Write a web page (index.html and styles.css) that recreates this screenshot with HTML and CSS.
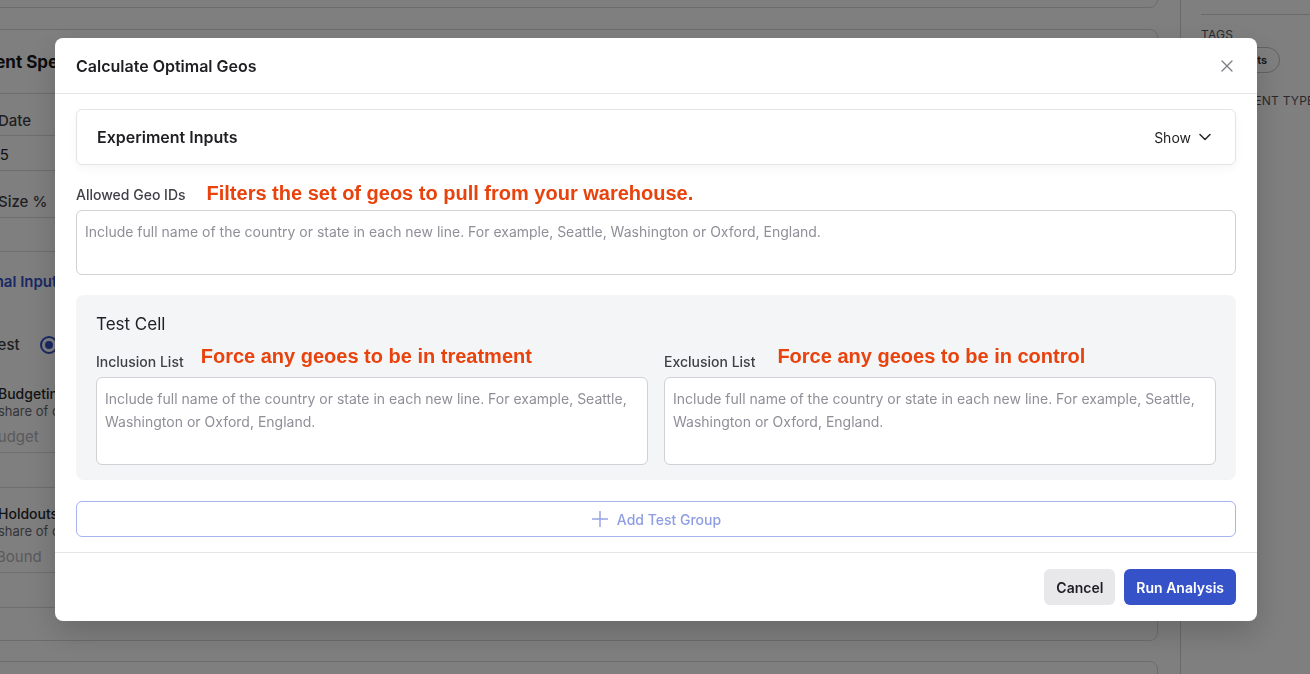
FILE: index.html
```html
<!DOCTYPE html>
<html lang="en">
<head>
<meta charset="utf-8">
<title>Calculate Optimal Geos</title>
<link rel="stylesheet" href="styles.css">
</head>
<body>
<div class="page">
  <main class="main">
    <section class="card card-prev"></section>
    <section class="card card-spec">
      <header class="spec-head"><h2 class="spec-title">Experiment Specs</h2></header>
      <div class="row row-1"><span class="bg-label">Date</span></div>
      <div class="row row-2"><span class="bg-value">2025</span></div>
      <div class="row row-3"><span class="bg-label bg-size">Size %</span></div>
      <div class="row row-4"></div>
      <div class="row row-5">
        <a class="bg-link">Additional Inputs</a>
        <div class="bg-radio-row"><span class="bg-label bg-test">Test</span><span class="radio"><span class="radio-dot"></span></span></div>
        <div class="bg-strong">Budgeting</div>
        <div class="bg-desc">share of control budget</div>
        <div class="bg-ph bg-ph-budget">Budget</div>
      </div>
      <div class="row row-6"></div>
      <div class="row row-7">
        <div class="bg-strong">Holdouts</div>
        <div class="bg-desc">share of control geos</div>
        <div class="bg-ph bg-ph-bound">Bound</div>
      </div>
      <div class="row row-8"></div>
    </section>
    <section class="card card-next"></section>
  </main>
  <aside class="side">
    <div class="side-block"></div>
    <div class="side-label side-label-tags">Tags</div>
    <span class="chip">Geo Tests</span>
    <div class="side-label side-label-type">Experiment Type</div>
  </aside>
</div>

<div class="overlay"></div>

<div class="modal" role="dialog" aria-label="Calculate Optimal Geos">
  <div class="modal-head">
    <h1 class="modal-title">Calculate Optimal Geos</h1>
    <button class="close-btn" aria-label="Close">
      <svg width="12" height="12" viewBox="0 0 12 12"><path d="M1 1L11 11M11 1L1 11" stroke="#7c7c82" stroke-width="1.3" stroke-linecap="round"/></svg>
    </button>
  </div>
  <div class="modal-body">
    <div class="collapse">
      <span class="collapse-title">Experiment Inputs</span>
      <button class="show-btn">Show
        <svg width="12" height="8" viewBox="0 0 12 8"><path d="M1 1.5L6 6.5L11 1.5" fill="none" stroke="#27272a" stroke-width="1.5" stroke-linecap="round" stroke-linejoin="round"/></svg>
      </button>
    </div>

    <div class="label-row label-row-geo">
      <label class="field-label" for="geo-ids">Allowed Geo IDs</label>
      <span class="note note-geo">Filters the set of geos to pull from your warehouse.</span>
    </div>
    <textarea id="geo-ids" class="input input-geo" placeholder="Include full name of the country or state in each new line. For example, Seattle, Washington or Oxford, England."></textarea>

    <div class="test-cell">
      <div class="test-title">Test Cell</div>
      <div class="cell-grid">
        <div class="cell-col">
          <div class="label-row">
            <label class="field-label" for="inc">Inclusion List</label>
            <span class="note note-cell note-inc">Force any geoes to be in treatment</span>
          </div>
          <textarea id="inc" class="input input-cell" placeholder="Include full name of the country or state in each new line. For example, Seattle, Washington or Oxford, England."></textarea>
        </div>
        <div class="cell-col">
          <div class="label-row">
            <label class="field-label" for="exc">Exclusion List</label>
            <span class="note note-cell note-exc">Force any geoes to be in control</span>
          </div>
          <textarea id="exc" class="input input-cell" placeholder="Include full name of the country or state in each new line. For example, Seattle, Washington or Oxford, England."></textarea>
        </div>
      </div>
    </div>

    <button class="add-btn">
      <svg width="18" height="18" viewBox="0 0 18 18"><path d="M9 1V17M1 9H17" stroke="#97a5e6" stroke-width="1.5"/></svg>
      Add Test Group
    </button>
  </div>
  <div class="modal-foot">
    <button class="btn btn-cancel">Cancel</button>
    <button class="btn btn-primary">Run Analysis</button>
  </div>
</div>
</body>
</html>
```

FILE: styles.css
```css
* { box-sizing: border-box; }
html, body { margin: 0; padding: 0; }
body {
  width: 1310px;
  height: 674px;
  overflow: hidden;
  background: #ffffff;
  color: #1f1f23;
  font-family: Inter, "Noto Sans", "Liberation Sans", sans-serif;
}
button { font-family: inherit; cursor: pointer; }

/* ---------- background page ---------- */
.page { display: flex; height: 674px; overflow: hidden; }
.main {
  flex: none;
  width: 1278px;
  margin-left: -120px;
  display: flex;
  flex-direction: column;
}
.card {
  flex: none;
  background: #fff;
  border: 1px solid #d9d9de;
  border-radius: 8px;
}
.card-prev { height: 108px; margin-top: -100px; }
.card-spec { height: 612px; margin-top: 21px; padding-left: 118px; display: flex; flex-direction: column; }
.card-next { height: 120px; margin-top: 20px; }

.spec-head {
  height: 64px;
  margin-left: -118px;
  padding-left: 46px;
  border-bottom: 1px solid #dcdce0;
  display: flex;
  align-items: center;
}
.spec-title { margin: 0; font-size: 17px; font-weight: 700; color: #18181b; }

.row { flex: none; margin-left: -118px; padding-left: 117px; border-bottom: 1px solid #dcdce0; }
.row-1 { height: 42px; padding-top: 16px; }
.row-2 { height: 35px; padding-top: 8px; }
.row-3 { height: 47px; padding-top: 20px; }
.row-4 { height: 34px; }
.row-5 { height: 201px; padding-top: 20px; }
.row-6 { height: 35px; }
.row-7 { height: 85px; padding-top: 17px; }
.row-8 { height: 35px; }

.bg-label { display: inline-block; font-size: 15px; line-height: 20px; font-weight: 500; color: #3f3f46; }
.bg-value { display: inline-block; margin-left: -26px; font-size: 15px; line-height: 20px; color: #27272a; }
.bg-link { display: block; margin-left: -55px; font-size: 15px; line-height: 20px; font-weight: 600; color: #3451c7; }
.bg-radio-row { display: flex; align-items: center; gap: 20px; height: 20px; margin-top: 43px; }
.bg-test { margin-left: -9px; }
.radio {
  width: 18px; height: 18px;
  border: 2px solid #3451c7;
  border-radius: 50%;
  display: flex; align-items: center; justify-content: center;
}
.radio-dot { width: 8px; height: 8px; border-radius: 50%; background: #3451c7; }
.bg-strong { font-size: 14px; line-height: 18px; font-weight: 500; color: #27272a; }
.row-5 .bg-strong { margin-top: 30px; }
.bg-desc { font-size: 13px; line-height: 16px; color: #6b6b73; white-space: nowrap; }
.bg-ph { margin-top: 8px; font-size: 15px; line-height: 20px; color: #b4b4bb; }
.bg-ph-budget { margin-left: -10px; }
.bg-ph-bound { margin-left: -2px; }

.side {
  flex: 1;
  margin-left: 22px;
  padding-left: 20px;
  border-left: 1px solid #d4d4d8;
  display: flex;
  flex-direction: column;
  align-items: flex-start;
}
.side-block { width: 100%; height: 15px; border-bottom: 1px solid #d4d4d8; }
.side-label {
  font-size: 12px;
  line-height: 16px;
  text-transform: uppercase;
  letter-spacing: 0.2px;
  color: #52525b;
  white-space: nowrap;
}
.side-label-tags { margin-top: 12px; }
.side-label-type { margin-top: 20px; }
.chip {
  margin-top: 4px;
  height: 26px;
  padding: 0 12px;
  border: 1px solid #c4c4ca;
  border-radius: 13px;
  font-size: 11px;
  font-weight: 600;
  line-height: 24px;
  color: #27272a;
}

/* ---------- overlay + modal ---------- */
.overlay { position: fixed; inset: 0; background: rgba(0, 0, 0, 0.5); }

.modal {
  position: fixed;
  top: 38px;
  left: 55px;
  width: 1202px;
  height: 583px;
  background: #fff;
  border-radius: 8px;
  box-shadow: 0 12px 32px rgba(0, 0, 0, 0.18);
  display: flex;
  flex-direction: column;
}
.modal-head {
  height: 56px;
  flex: none;
  padding: 0 24px 0 21px;
  border-bottom: 1px solid #e6e6e9;
  display: flex;
  align-items: center;
  justify-content: space-between;
}
.modal-title { margin: 0; font-size: 16px; font-weight: 600; color: #1f1f23; }
.close-btn { border: 0; background: none; padding: 0; width: 12px; height: 12px; display: flex; }

.modal-body { padding: 15px 21px 15px; flex: none; }

.collapse {
  height: 56px;
  border: 1px solid #e4e4e7;
  border-radius: 6px;
  padding: 0 24px 0 20px;
  display: flex;
  align-items: center;
  justify-content: space-between;
  box-shadow: 0 4px 10px rgba(0, 0, 0, 0.04);
}
.collapse-title { font-size: 16px; font-weight: 600; color: #1f1f23; }
.show-btn {
  border: 0; background: none; padding: 0;
  display: flex; align-items: center; gap: 8px;
  font-size: 14px; color: #1f1f23;
}

.label-row { height: 24px; margin-bottom: 3px; display: flex; align-items: center; }
.label-row-geo { margin-top: 18px; }
.field-label { font-size: 14px; line-height: 16px; font-weight: 500; color: #3f3f46; }
.note {
  font-family: "Liberation Sans", Arial, sans-serif;
  font-weight: 700;
  font-size: 20px;
  line-height: 23px;
  color: #e8420d;
  white-space: nowrap;
}
.note-geo { margin-left: 21px; margin-top: -4px; }
.note-cell { margin-top: -12px; }
.note-inc { margin-left: 17px; }
.note-exc { margin-left: 22px; }

.input {
  display: block;
  width: 100%;
  resize: none;
  border: 1px solid #d1d1d6;
  border-radius: 6px;
  background: #fff;
  padding: 9px 8px;
  font-family: Inter, "Noto Sans", sans-serif;
  font-size: 14px;
  line-height: 23px;
  color: #1f1f23;
  outline: none;
}
.input::placeholder { color: #8f8f98; opacity: 1; }
.input-geo { height: 65px; }
.input-cell { height: 88px; }

.test-cell {
  margin-top: 20px;
  padding: 17px 20px 15px;
  background: #f4f5f7;
  border-radius: 8px;
}
.test-title { font-size: 17px; line-height: 24px; color: #1f1f23; margin-bottom: 14px; }
.cell-grid { display: grid; grid-template-columns: 1fr 1fr; gap: 16px; }

.add-btn {
  margin-top: 21px;
  width: 100%;
  height: 36px;
  border: 1px solid #a7b4ee;
  border-radius: 6px;
  background: #fff;
  display: flex;
  align-items: center;
  justify-content: center;
  gap: 8px;
  font-size: 14px;
  font-weight: 500;
  color: #8e9de2;
}

.modal-foot {
  flex: 1;
  border-top: 1px solid #e6e6e9;
  padding: 16px 21px;
  display: flex;
  justify-content: flex-end;
  align-items: flex-start;
  gap: 9px;
}
.btn {
  height: 36px;
  padding: 0 12px;
  border: 0;
  border-radius: 6px;
  font-size: 14px;
  font-weight: 600;
}
.btn-cancel { background: #e8e8ea; color: #1f1f23; }
.btn-primary { background: #3652c9; color: #fff; }
```
